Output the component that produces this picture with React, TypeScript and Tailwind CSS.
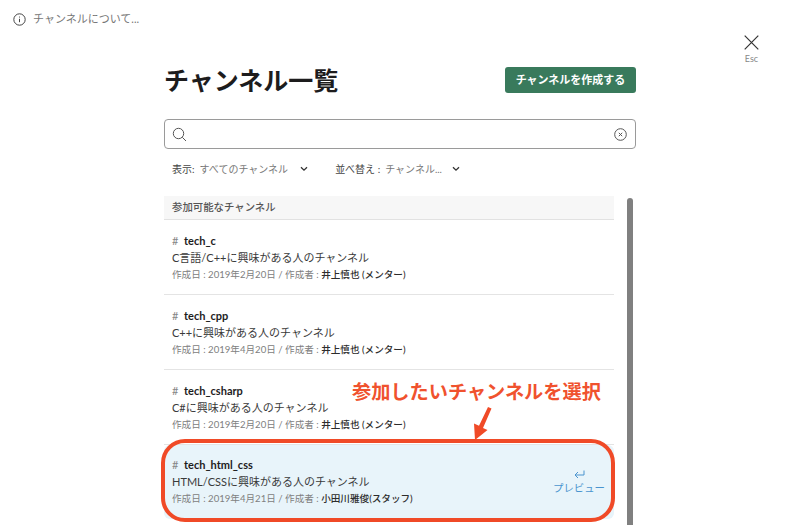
import React from 'react';

interface Channel {
  name: string;
  desc: string;
  date: string;
  creator: string;
}

const CHANNELS: Channel[] = [
  { name: 'tech_c', desc: 'C言語/C++に興味がある人のチャンネル', date: '2019年2月20日', creator: '井上慎也 (メンター)' },
  { name: 'tech_cpp', desc: 'C++に興味がある人のチャンネル', date: '2019年4月20日', creator: '井上慎也 (メンター)' },
  { name: 'tech_csharp', desc: 'C#に興味がある人のチャンネル', date: '2019年2月20日', creator: '井上慎也 (メンター)' },
];

const FONT = "font-['Lato','Noto_Sans_CJK_JP',sans-serif]";

const Chevron = () => (
  <svg width="8" height="6" viewBox="0 0 8 6" fill="none" stroke="#333" strokeWidth="1.3">
    <path d="M1 1.2 L4 4.2 L7 1.2" />
  </svg>
);

const ChannelText = ({ channel }: { channel: Channel }) => (
  <>
    <div className="flex items-center h-[16px] text-[11px] leading-[16px] text-[#1d1c1d]">
      <span className="w-[12px] text-[#868686]">#</span>
      <span className="font-bold">{channel.name}</span>
    </div>
    <div className="h-[17px] text-[11px] leading-[18px] text-[#3a3a3a]">{channel.desc}</div>
    <div className="h-[18px] text-[9.6px] leading-[18px] text-[#808080]">
      作成日 : {channel.date} / 作成者 : <span className="font-medium text-[#2c2c2c]">{channel.creator}</span>
    </div>
  </>
);

export default function App() {
  return (
    <div className={`relative w-[800px] h-[525px] overflow-hidden bg-white ${FONT}`}>
      <div className="flex items-center gap-[7px] pl-[13px] pt-[13px] h-[25px] text-[11px] text-[#777]">
        <svg width="13" height="13" viewBox="0 0 13 13" fill="none" stroke="#444" strokeWidth="1">
          <circle cx="6.5" cy="6.5" r="5.7" />
          <path d="M6.5 5.8 V9.2" />
          <path d="M6.5 3.6 V4.5" />
        </svg>
        <span>チャンネルについて...</span>
      </div>

      <div className="absolute top-[35px] left-[744px] flex flex-col items-center w-[15px]">
        <svg width="15" height="15" viewBox="0 0 15 15" fill="none" stroke="#333" strokeWidth="1.2">
          <path d="M0.7 0.7 L14.3 14.3 M14.3 0.7 L0.7 14.3" />
        </svg>
        <span className="text-[9px] leading-[12px] mt-[3px] text-[#888]">Esc</span>
      </div>

      <div className="ml-[164px] w-[472px]">
        <div className="flex items-center justify-between mt-[42px] h-[26px]">
          <h1 className="text-[25px] leading-[26px] font-bold text-[#1d1c1d]">チャンネル一覧</h1>
          <button className="w-[131px] h-[26px] rounded-[3px] bg-[#397a5c] text-white text-[11px] font-bold">
            チャンネルを作成する
          </button>
        </div>

        <div className="flex items-center justify-between mt-[26px] h-[30px] rounded-[4px] border border-[#9a9a9a] pl-[7px] pr-[8px]">
          <svg width="15" height="15" viewBox="0 0 15 15" fill="none" stroke="#555" strokeWidth="1">
            <circle cx="6.5" cy="6.5" r="5.2" />
            <path d="M10.3 10.3 L14 14" />
          </svg>
          <svg width="13" height="13" viewBox="0 0 13 13" fill="none" stroke="#555" strokeWidth="1">
            <circle cx="6.5" cy="6.5" r="5.8" />
            <path d="M4.8 4.8 L8.2 8.2 M8.2 4.8 L4.8 8.2" />
          </svg>
        </div>

        <div className="flex items-center mt-[11px] h-[18px] pl-[8px] text-[10px] text-[#777]">
          <span className="text-[#444]">表示:</span>
          <span className="ml-[5px]">すべてのチャンネル</span>
          <span className="ml-[12px]"><Chevron /></span>
          <span className="ml-[27px] text-[#444]">並べ替え :</span>
          <span className="ml-[5px]">チャンネル...</span>
          <span className="ml-[10px]"><Chevron /></span>
        </div>

        <div className="flex mt-[18px]">
          <div className="w-[450px]">
            <div className="flex items-center h-[24px] pl-[8px] bg-[#f7f7f7] border-b border-[#e2e2e2] text-[10.4px] font-medium text-[#555]">
              参加可能なチャンネル
            </div>
            {CHANNELS.map((c) => (
              <div key={c.name} className="h-[75px] pt-[13px] pl-[8px] border-b border-[#e4e4e4]">
                <ChannelText channel={c} />
              </div>
            ))}
            <div className="flex items-center justify-between h-[74px] pl-[8px] pr-[9px] bg-[#e8f4fa] rounded-[6px]">
              <div>
                <ChannelText
                  channel={{
                    name: 'tech_html_css',
                    desc: 'HTML/CSSに興味がある人のチャンネル',
                    date: '2019年4月21日',
                    creator: '小田川雅俊(スタッフ)',
                  }}
                />
              </div>
              <div className="flex flex-col items-center text-[#4a94cf] text-[10.4px] leading-[14px]">
                <svg width="11" height="9" viewBox="0 0 11 9" fill="none" stroke="#4a94cf" strokeWidth="1">
                  <path d="M10 0.5 V5 H1 M4 2 L1 5 L4 8" />
                </svg>
                <span className="mt-[2px]">プレビュー</span>
              </div>
            </div>
          </div>
          <div className="ml-[13px] mt-[2px] w-[6px] h-[330px] rounded-t-[3px] bg-[#808080]" />
        </div>
      </div>

      <div className="absolute left-[161px] top-[439px] w-[454px] h-[83px] rounded-[24px] border-[4px] border-[#f04a27]" />
      <div className="absolute left-[352px] top-[380px] text-[19.2px] leading-[24px] font-bold text-[#f0522e]">
        参加したいチャンネルを選択
      </div>
      <svg className="absolute left-[472px] top-[406px]" width="22" height="34" viewBox="0 0 22 34" fill="#f04a27" stroke="none">
        <path d="M16 1 L19.5 2.5 L11 22 L15.5 24 L3 34 L2 17.5 L7 19.8 Z" />
      </svg>
    </div>
  );
}
